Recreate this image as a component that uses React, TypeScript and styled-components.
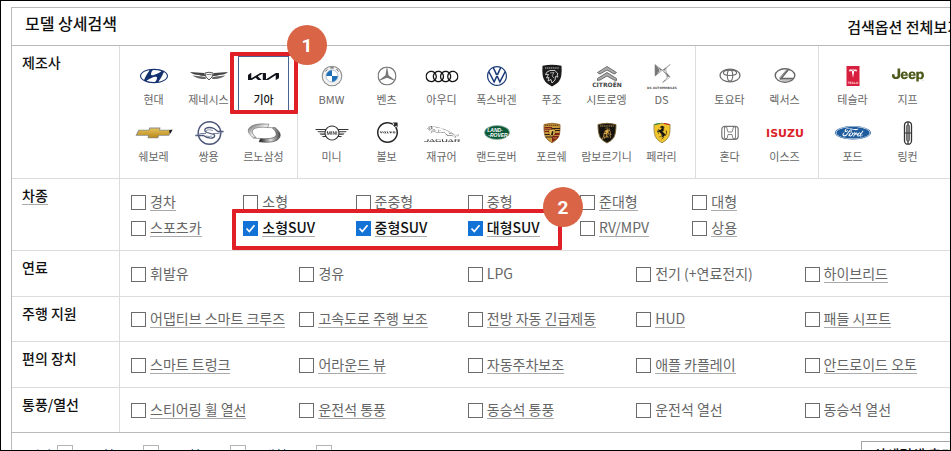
import React, { useState } from 'react';
import styled, { createGlobalStyle, css } from 'styled-components';
import {
  SiAudi, SiDsautomobiles, SiFerrari, SiFord, SiHyundai, SiJaguar, SiJeep, SiKia,
  SiLamborghini, SiMercedes, SiMini, SiTesla, SiVolkswagen, SiVolvo,
} from 'react-icons/si';

const GlobalStyle = createGlobalStyle`
  *, *::before, *::after { box-sizing: border-box; }
  body {
    margin: 0;
    background: #fff;
    color: #111;
    font-family: "Noto Sans CJK KR", "Noto Sans", sans-serif;
    font-size: 14px;
  }
  button, input { font-family: inherit; }
`;

/* ---------- page shell ---------- */

const Frame = styled.div`
  height: 100vh;
  overflow: hidden;
  border: 1px solid #000;
  padding: 6px 0 0 10px;
`;

const Panel = styled.main`
  margin-right: -24px;
  border: 1px solid #b9b9b9;
`;

const Header = styled.header`
  display: flex;
  justify-content: space-between;
  padding: 3px 12px 0 13px;
  height: 38px;
  border-bottom: 1px solid #b9b9b9;
`;

const Title = styled.h1`
  margin: 0;
  font-size: 16px;
  font-weight: 500;
  line-height: 24px;
  color: #111;
`;

const HeaderLink = styled.a`
  padding-top: 4px;
  font-size: 15px;
  font-weight: 500;
  line-height: 24px;
  color: #111;
  text-decoration: none;
`;

const Row = styled.section`
  display: grid;
  grid-template-columns: 108px minmax(0, 1fr);
  border-bottom: 1px solid #dcdcdc;

  &:last-of-type { border-bottom-color: #b9b9b9; }
`;

const RowHead = styled.div`
  padding: 6px 0 0 10px;
  border-right: 1px solid #dcdcdc;
`;

const RowLabel = styled.h2<{ $dotted?: boolean }>`
  display: inline-block;
  margin: 0;
  font-size: 14px;
  font-weight: 500;
  line-height: 17px;
  color: #111;
  border-bottom: 1px solid ${(p) => (p.$dotted ? '#aaa' : 'transparent')};
`;

/* ---------- callouts ---------- */

const Badge = styled.span`
  position: absolute;
  display: grid;
  place-items: center;
  width: 40px;
  height: 40px;
  border-radius: 50%;
  background: #d96546;
  color: #fff;
  font: 700 19px/1 Roboto, sans-serif;
`;

const Callout = styled.div`
  position: absolute;
  border: 4px solid #e01f26;
  border-radius: 1px;
  pointer-events: none;
  z-index: 2;
`;

const MakerCallout = styled(Callout)`
  inset: -5px -10px -2px -9px;

  ${Badge} { top: -31px; right: -33px; }
`;

const TypeCallout = styled(Callout)`
  grid-column: 2 / 5;
  inset: -10px 18px -13px -11px;

  ${Badge} { top: -26px; right: -25px; }
`;

/* ---------- makers ---------- */

const Makers = styled.div`
  display: flex;
`;

const MakerGroup = styled.div<{ $cols: number }>`
  display: grid;
  grid-template-columns: repeat(${(p) => p.$cols}, 51px);
  column-gap: 4px;
  padding: 10px 8px 8px;
  border-right: 1px solid #dcdcdc;

  &:last-child { border-right: 0; }
`;

const MakerButton = styled.button<{ $on: boolean }>`
  position: relative;
  display: flex;
  flex-direction: column;
  align-items: center;
  height: 57px;
  padding: 5px 0 0;
  border: 1px solid transparent;
  background: none;
  color: #666;
  font-size: 11px;
  line-height: 16px;
  white-space: nowrap;
  cursor: pointer;

  ${(p) => p.$on && css`
    border-color: #48648f;
    color: #111;
    font-weight: 500;
  `}
`;

const MakerName = styled.span`
  margin-top: 1px;
`;

const LogoSvg = styled.svg`
  display: block;
  flex: none;
  width: 40px;
  height: 28px;
  overflow: visible;
`;

const shield = 'M12 5.5Q20 3 28 5.5Q28.500 16 25.500 19.500Q23.500 22 20 23.800Q16.500 22 14.500 19.500Q11.500 16 12 5.500Z';

const logos: Record<string, React.ReactNode> = {
  hyundai: <SiHyundai x={6} y={0} size={28} color="#14316f" />,
  genesis: (
    <g fill="#444">
      <path d="M1 10L15 11L16.500 14L12 13.800L10 13Q4 13 1 10Z" />
      <path d="M3.500 13.400L11 14.300L16.500 15L17 17Q8 17 3.500 13.400Z" fill="#666" />
      <path d="M39 10L25 11L23.500 14L28 13.800L30 13Q36 13 39 10Z" />
      <path d="M36.500 13.400L29 14.300L23.500 15L23 17Q32 17 36.500 13.400Z" fill="#666" />
      <path d="M15.800 11Q20 9.500 24.200 11Q24 15.500 20 18Q16 15.500 15.800 11Z" fill="#f1f1f1" stroke="#555" strokeWidth="1" />
      <path d="M17.500 12.500H22.500" stroke="#888" strokeWidth="1" />
    </g>
  ),
  kia: <SiKia x={4} y={-1} size={31} color="#10131c" />,
  chevrolet: (
    <g>
      <defs>
        <linearGradient id="gold" x1="0" y1="0" x2="0" y2="1">
          <stop offset="0" stopColor="#e6c15a" />
          <stop offset="1" stopColor="#b98a1f" />
        </linearGradient>
      </defs>
      <path d="M4.500 10.800H14.500L15.500 8.500H26.500L26 10.800H38.500L35 16.800H25L24.200 19.300H13.500L14 16.800H1.500Z" fill="#8a8a86" />
      <path d="M5.300 11.600H15.300L16.200 9.400H25.500L25 11.600H37L34.400 16H24.300L23.500 18.400H14.600L15 16H2.900Z" fill="url(#gold)" />
      <path d="M35.500 11L38.500 10.800L36.500 14.500L35 13Z" fill="#222" />
    </g>
  ),
  ssangyong: (
    <g fill="none" stroke="#4a5578">
      <circle cx="20.500" cy="14" r="11.300" strokeWidth="1.400" />
      <path d="M34.500 12.500H29L25 9.500Q20 7.500 16.500 9.500Q14.500 12 18 13.500L25 15.500Q27 18 23 19Q18 19.500 14.500 16.500H6.500" strokeWidth="1.300" />
      <path d="M6.500 16.500L12 14.500H17M34.500 12.500L29 14.500H24" strokeWidth="1" stroke="#7984a0" />
      <path d="M17 11.500Q20 10 24 11.500M17 17Q20 18 23 17" strokeWidth=".8" stroke="#7984a0" />
    </g>
  ),
  renault: (
    <g>
      <defs>
        <linearGradient id="steel" x1="0" y1="0" x2="1" y2="1">
          <stop offset="0" stopColor="#555" />
          <stop offset=".5" stopColor="#f2f2f2" />
          <stop offset="1" stopColor="#777" />
        </linearGradient>
        <linearGradient id="steelDark" x1="0" y1="0" x2="1" y2="0">
          <stop offset="0" stopColor="#111" />
          <stop offset=".55" stopColor="#ddd" />
          <stop offset="1" stopColor="#444" />
        </linearGradient>
      </defs>
      <path d="M25 5.200Q8 3.500 4.500 10Q3 14 9.500 19L12 18.500Q6.500 13.500 9 10.500Q13 7.500 23.500 8.500Z" fill="url(#steel)" stroke="#666" strokeWidth=".6" />
      <path d="M15 22.800Q32 25 35.800 18.500Q38 14 31 8.500L28.500 9.200Q34 13.500 31.500 17.500Q27 20.500 16.500 19.500Z" fill="url(#steelDark)" stroke="#444" strokeWidth=".6" />
      <path d="M23.500 8.500Q27 8.800 31 8.500M9.500 19Q13 19.300 16.500 19.500" fill="none" stroke="#888" strokeWidth=".8" />
    </g>
  ),
  bmw: (
    <g>
      <circle cx="20" cy="14" r="9.800" fill="#f3f3f3" stroke="#8c8c8c" strokeWidth="1.100" />
      <circle cx="20" cy="14" r="6" fill="#fff" stroke="#8fa6b8" strokeWidth=".7" />
      <path d="M20 14V8.300A5.700 5.700 0 0 0 14.300 14ZM20 14V19.700A5.700 5.700 0 0 0 25.700 14Z" fill="#1d6fb8" />
      <path d="M13.300 9.500L15.300 7.300M18.500 6.500L19.200 5.200L20 6.500L20.800 5.200L21.500 6.500M24.500 7L26.500 9.500" stroke="#666" strokeWidth="1" fill="none" />
    </g>
  ),
  mercedes: <SiMercedes x={10.5} y={4.5} size={19} color="#777" />,
  audi: <SiAudi x={3.5} y={-2} size={33} color="#151515" />,
  volkswagen: <SiVolkswagen x={10} y={4} size={20} color="#1b3b78" />,
  peugeot: (
    <g>
      <path d="M10.500 3.800Q20 1.800 29.500 3.800Q30.500 16 26.500 20Q24 22.500 20 24.500Q16 22.500 13.500 20Q9.500 16 10.500 3.800Z" fill="#1b1b1b" />
      <path d="M13 6H27" stroke="#ccc" strokeWidth="1.200" strokeDasharray="1.300 .6" />
      <path d="M15 10L18 8.500H23L26 12L25 13L26 15L23.500 14.500L23 18L20 21L19 17.500L16 19L17 15.500L14.500 16L16.500 12.500L13.500 12.500Z" fill="none" stroke="#ddd" strokeWidth=".9" />
      <path d="M18 11L22 10.500L20 14L22 16" stroke="#bbb" strokeWidth=".8" fill="none" />
    </g>
  ),
  citroen: (
    <g>
      <path d="M20 4.500L29.500 10.500Q28 12 27 12L20 8L13 12Q12 12 10.500 10.500Z" fill="#aaa" stroke="#555" strokeWidth=".8" />
      <path d="M20 10.500L29.500 16.500V18.500L27 18L20 14L13 18L10.500 18.500V16.500Z" fill="#aaa" stroke="#555" strokeWidth=".8" />
      <text x="20" y="24.500" textAnchor="middle" fontFamily="DejaVu Sans" fontWeight="700" fontSize="6" fill="#444">CITROËN</text>
    </g>
  ),
  ds: (
    <g>
      <SiDsautomobiles x={11} y={2} size={19} color="#777" />
      <text x="20" y="26.500" textAnchor="middle" fontFamily="DejaVu Sans" fontWeight="700" fontSize="3" fill="#555">DS AUTOMOBILES</text>
    </g>
  ),
  mini: <SiMini x={3} y={-3} size={34} color="#333" />,
  volvo: <SiVolvo x={10} y={3} size={21} color="#222" />,
  jaguar: <SiJaguar x={2} y={-3} size={36} color="#333" />,
  landrover: (
    <g>
      <ellipse cx="20" cy="13.500" rx="12.500" ry="7" fill="#0d5a3a" stroke="#9db8aa" strokeWidth=".8" />
      <g fontFamily="Liberation Sans" fontWeight="700" fontStyle="italic" fontSize="5" fill="#fff" textAnchor="middle">
        <text x="18" y="13">LAND-</text>
        <text x="21" y="17.500">-ROVER</text>
      </g>
    </g>
  ),
  porsche: (
    <g>
      <path d={shield} fill="#c9983a" stroke="#8a5a22" strokeWidth=".8" />
      <path d="M12.500 8H20V13H12.700ZM20 14H27.800Q27 18 25.500 19.500L20 23Z" fill="#7d1f1a" />
      <path d="M20 9.500H28M20 11.500H28M12.800 15.500H20M13.500 18H20" stroke="#2b211a" strokeWidth="1.100" />
      <path d="M13 9.800H19M13 11.500H19M21 16.500H27M21 19H25" stroke="#d9a441" strokeWidth=".8" />
      <path d="M13 6.300H27" stroke="#4b3312" strokeWidth="1.100" strokeDasharray="1.400 .6" />
      <path d="M17 10.500H23V14.500Q22 16.500 20 17.500Q18 16.500 17 14.500Z" fill="#e5bd55" stroke="#5b3d10" strokeWidth=".5" />
      <path d="M19 16L20 12L21.500 12.500L20.800 16.200" fill="#241a10" />
    </g>
  ),
  lamborghini: (
    <g>
      <path d="M11 5.500Q20 3 29 5.500Q29 15 26.500 19Q24 22 20 24Q16 22 13.500 19Q11 15 11 5.500Z" fill="#17130e" stroke="#7a6431" strokeWidth=".9" />
      <path d="M13 7H27" stroke="#c7a560" strokeWidth=".9" strokeDasharray="1.300 .5" />
      <SiLamborghini x={14} y={8.5} size={12} color="#dba849" />
    </g>
  ),
  ferrari: (
    <g>
      <path d={shield} fill="#f0c52b" stroke="#8d7a3a" strokeWidth=".8" />
      <path d="M12.500 5.800Q16 4.500 18 4.500" stroke="#2d8a3e" strokeWidth="1.200" fill="none" />
      <path d="M22 4.500Q25 4.700 27.500 5.800" stroke="#c8282b" strokeWidth="1.200" fill="none" />
      <SiFerrari x={13} y={6.5} size={14} color="#111" />
    </g>
  ),
  toyota: (
    <g fill="none" stroke="#6d6d6d">
      <ellipse cx="20" cy="13.500" rx="10" ry="6.300" strokeWidth="1.300" />
      <ellipse cx="20" cy="10.800" rx="6.600" ry="2.700" strokeWidth="1.100" />
      <ellipse cx="20" cy="13.500" rx="2.700" ry="5.600" strokeWidth="1.100" />
    </g>
  ),
  lexus: (
    <g fill="none" stroke="#666">
      <ellipse cx="20" cy="13.500" rx="9.800" ry="6.700" strokeWidth="1.400" />
      <path d="M23.500 7.500L16 16.500H28.500" strokeWidth="1.600" />
      <path d="M21.500 8L15 15.500Q14.500 18 17 18H27" strokeWidth=".8" />
    </g>
  ),
  honda: (
    <g fill="none" stroke="#777">
      <rect x="11.800" y="7.300" width="16.400" height="13" rx="3" strokeWidth="1.200" />
      <path d="M14.500 8V19.500H17L18 15.500H22L23 19.500H25.500V8H23.500L22 13H18L16.500 8Z" strokeWidth=".9" />
    </g>
  ),
  isuzu: (
    <text x="20" y="17.500" textAnchor="middle" fontFamily="DejaVu Sans" fontWeight="700" fontSize="11" fill="#dc2328">ISUZU</text>
  ),
  tesla: (
    <g>
      <rect x="13.500" y="4" width="13" height="20" fill="#d81f3d" />
      <SiTesla x={15.5} y={7} size={9} color="#fff" />
      <text x="20" y="21.500" textAnchor="middle" fontFamily="DejaVu Sans" fontWeight="700" fontSize="3" fill="#ffd5dc">TESLA</text>
    </g>
  ),
  jeep: <SiJeep x={4} y={-3} size={32} color="#4c5a1c" />,
  ford: (
    <g>
      <ellipse cx="20" cy="13.700" rx="17.800" ry="7" fill="#fff" />
      <SiFord x={2} y={-4.3} size={36} color="#1f5c9e" />
    </g>
  ),
  lincoln: (
    <g fill="none" stroke="#333">
      <rect x="16.500" y="2.800" width="7" height="22.400" rx="3.500" strokeWidth="1.300" />
      <path d="M20 3V25M16.500 14H23.500" strokeWidth="1.200" />
      <rect x="18.500" y="6" width="3" height="16" rx="1" strokeWidth=".7" />
    </g>
  ),
};

type Maker = [id: string, name: string];

const makerGroups: { cols: number; makers: Maker[] }[] = [
  {
    cols: 3,
    makers: [
      ['hyundai', '현대'], ['genesis', '제네시스'], ['kia', '기아'],
      ['chevrolet', '쉐보레'], ['ssangyong', '쌍용'], ['renault', '르노삼성'],
    ],
  },
  {
    cols: 7,
    makers: [
      ['bmw', 'BMW'], ['mercedes', '벤츠'], ['audi', '아우디'], ['volkswagen', '폭스바겐'],
      ['peugeot', '푸조'], ['citroen', '시트로엥'], ['ds', 'DS'],
      ['mini', '미니'], ['volvo', '볼보'], ['jaguar', '재규어'], ['landrover', '랜드로버'],
      ['porsche', '포르쉐'], ['lamborghini', '람보르기니'], ['ferrari', '페라리'],
    ],
  },
  { cols: 2, makers: [['toyota', '토요타'], ['lexus', '렉서스'], ['honda', '혼다'], ['isuzu', '이스즈']] },
  { cols: 2, makers: [['tesla', '테슬라'], ['jeep', '지프'], ['ford', '포드'], ['lincoln', '링컨']] },
];

/* ---------- check options ---------- */

const Options = styled.div<{ $tight?: boolean }>`
  display: flex;
  flex-direction: column;
  gap: 8px;
  padding: ${(p) => (p.$tight ? 13 : 14)}px 0 13px 11px;
`;

const OptionLine = styled.div<{ $six?: boolean }>`
  position: relative;
  display: grid;
  grid-template-columns: ${(p) =>
    p.$six ? 'repeat(6, minmax(0, 2fr)) minmax(0, 3fr)' : 'repeat(5, minmax(0, 1fr))'};
`;

const OptionLabel = styled.label`
  display: flex;
  align-items: flex-start;
  gap: 4px;
  height: 18px;
  white-space: nowrap;
  cursor: pointer;
`;

const CheckBox = styled.input`
  appearance: none;
  flex: none;
  width: 15px;
  height: 15px;
  margin: 2px 0 0;
  border: 1px solid #6b6b6b;
  background: #fff;

  &:checked {
    border-color: #1272d6;
    background: #1272d6 url("data:image/svg+xml,%3Csvg xmlns='http://www.w3.org/2000/svg' viewBox='0 0 13 13'%3E%3Cpath d='M2.500 6.500L5.300 9.500L10.500 3.300' fill='none' stroke='white' stroke-width='1.700'/%3E%3C/svg%3E") center / 13px no-repeat;
  }
`;

const OptionText = styled.span<{ $plain?: boolean }>`
  line-height: 17px;
  color: #666;
  border-bottom: 1px solid ${(p) => (p.$plain ? 'transparent' : '#aaa')};

  ${CheckBox}:checked + & {
    color: #111;
    font-weight: 500;
  }
`;

type OptionData = { text: string; plain?: boolean };
const linked = (...names: string[]): OptionData[] => names.map((text) => ({ text }));
const plain = (...names: string[]): OptionData[] => names.map((text) => ({ text, plain: true }));

const bodyTypes: OptionData[][] = [
  linked('경차', '소형', '준중형', '중형', '준대형', '대형'),
  linked('스포츠카', '소형SUV', '중형SUV', '대형SUV', 'RV/MPV', '상용'),
];

const featureRows: { label: string; tight?: boolean; options: OptionData[] }[] = [
  { label: '연료', options: [...plain('휘발유', '경유', 'LPG', '전기 (+연료전지)'), ...linked('하이브리드')] },
  {
    label: '주행 지원',
    tight: true,
    options: linked('어댑티브 스마트 크루즈', '고속도로 주행 보조', '전방 자동 긴급제동', 'HUD', '패들 시프트'),
  },
  {
    label: '편의 장치',
    options: linked('스마트 트렁크', '어라운드 뷰', '자동주차보조', '애플 카플레이', '안드로이드 오토'),
  },
  {
    label: '통풍/열선',
    tight: true,
    options: [...linked('스티어링 휠 열선', '운전석 통풍', '동승석 통풍'), ...plain('운전석 열선', '동승석 열선')],
  },
];

/* ---------- selected filters ---------- */

const Footer = styled.footer`
  display: flex;
  justify-content: space-between;
  align-items: flex-start;
  padding: 8px 6px 12px 16px;
`;

const Chips = styled.ul`
  display: flex;
  gap: 17px;
  margin: 0;
  padding: 4px 0 0;
  list-style: none;
`;

const Chip = styled.li`
  display: flex;
  gap: 5px;
  font-size: 13px;
  line-height: 19px;
  color: #2f5496;
`;

const ChipRemove = styled.button`
  width: 16px;
  height: 16px;
  padding: 0;
  border: 1px solid #b5b5b5;
  background: #fff;
  color: #888;
  font-size: 12px;
  line-height: 16px;
`;

const MoreButton = styled.button`
  height: 25px;
  padding: 0 12px;
  border: 1px solid #a5a5a5;
  background: #fff;
  color: #111;
  font-size: 14px;
  font-weight: 500;
  line-height: 18px;
  white-space: nowrap;
`;

/* ---------- components ---------- */

function Option({ data, on, toggle }: { data: OptionData; on: boolean; toggle: (t: string) => void }) {
  return (
    <OptionLabel>
      <CheckBox type="checkbox" checked={on} onChange={() => toggle(data.text)} />
      <OptionText $plain={data.plain}>{data.text}</OptionText>
    </OptionLabel>
  );
}

export default function App() {
  const [maker, setMaker] = useState('kia');
  const [checked, setChecked] = useState<string[]>(['소형SUV', '중형SUV', '대형SUV']);
  const toggle = (text: string) =>
    setChecked((list) => (list.includes(text) ? list.filter((t) => t !== text) : [...list, text]));

  const makerName = makerGroups.flatMap((g) => g.makers).find(([id]) => id === maker)?.[1] ?? '';

  return (
    <>
      <GlobalStyle />
      <Frame>
        <Panel>
          <Header>
            <Title>모델 상세검색</Title>
            <HeaderLink href="#all">검색옵션 전체보기</HeaderLink>
          </Header>

          <Row>
            <RowHead><RowLabel>제조사</RowLabel></RowHead>
            <Makers>
              {makerGroups.map((group) => (
                <MakerGroup key={group.makers[0][0]} $cols={group.cols}>
                  {group.makers.map(([id, name]) => (
                    <MakerButton key={id} type="button" $on={id === maker} aria-pressed={id === maker} onClick={() => setMaker(id)}>
                      <LogoSvg viewBox="0 0 40 28" aria-hidden="true">{logos[id]}</LogoSvg>
                      <MakerName>{name}</MakerName>
                      {id === 'kia' && <MakerCallout><Badge>1</Badge></MakerCallout>}
                    </MakerButton>
                  ))}
                </MakerGroup>
              ))}
            </Makers>
          </Row>

          <Row>
            <RowHead><RowLabel $dotted>차종</RowLabel></RowHead>
            <Options>
              {bodyTypes.map((line, i) => (
                <OptionLine key={i} $six>
                  {line.map((o) => (
                    <Option key={o.text} data={o} on={checked.includes(o.text)} toggle={toggle} />
                  ))}
                  {i === 1 && <TypeCallout><Badge>2</Badge></TypeCallout>}
                </OptionLine>
              ))}
            </Options>
          </Row>

          {featureRows.map((row) => (
            <Row key={row.label}>
              <RowHead><RowLabel>{row.label}</RowLabel></RowHead>
              <Options $tight={row.tight}>
                <OptionLine>
                  {row.options.map((o) => (
                    <Option key={o.text} data={o} on={checked.includes(o.text)} toggle={toggle} />
                  ))}
                </OptionLine>
              </Options>
            </Row>
          ))}

          <Footer>
            <Chips>
              {[makerName, ...checked].map((name) => (
                <Chip key={name}>
                  {name}
                  <ChipRemove type="button" aria-label={`${name} 삭제`} onClick={() => toggle(name)}>×</ChipRemove>
                </Chip>
              ))}
            </Chips>
            <MoreButton type="button">상세검색 추가</MoreButton>
          </Footer>
        </Panel>
      </Frame>
    </>
  );
}
